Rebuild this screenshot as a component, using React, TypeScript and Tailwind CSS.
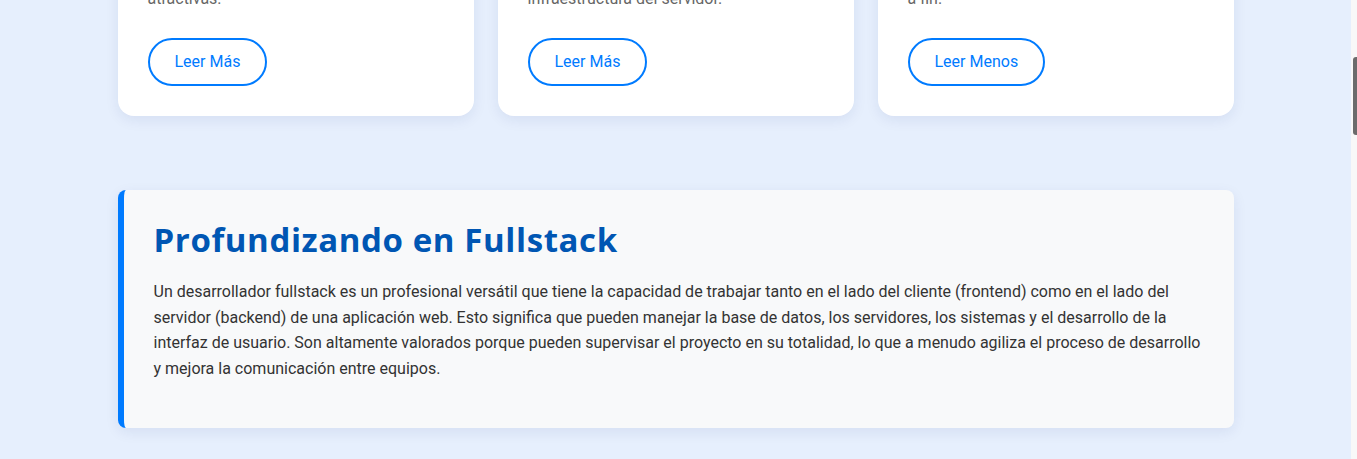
import React from "react";

const cards = [
  { tail: "atractivas.", label: "Leer Más" },
  { tail: "infraestructura del servidor.", label: "Leer Más" },
  { tail: "a fin.", label: "Leer Menos" },
];

export default function App() {
  return (
    <div className="flex h-[459px] overflow-hidden bg-[#e6effd] font-['Roboto',sans-serif]">
      <main className="flex-1">
        <div className="mx-auto w-[1140px] px-3">
          {/* Cards (scrolled, only the bottom is visible) */}
          <div className="-mt-[44px] grid grid-cols-3 gap-6">
            {cards.map((card, idx) => (
              <div
                key={idx}
                className="rounded-2xl bg-white p-[30px] shadow-[0_4px_14px_rgba(0,40,120,0.08)]"
              >
                <p className="mb-[26px] text-base leading-[1.6] text-[#666]">{card.tail}</p>
                <button className="rounded-full border-2 border-[#007bff] px-[25px] py-[10px] text-base leading-6 text-[#007bff]">
                  {card.label}
                </button>
              </div>
            ))}
          </div>

          {/* Deep dive */}
          <section className="mt-[74px] rounded-lg border-l-[6px] border-[#007bff] bg-[#f8f9fa] py-[30px] pl-[30px] pr-[30px] shadow-[0_4px_14px_rgba(0,40,120,0.08)]">
            <h2 className="mb-5 font-['Open_Sans',sans-serif] text-[33px] font-bold leading-[1.2] tracking-[0.6px] text-[#0056b3]">
              Profundizando en Fullstack
            </h2>
            <p className="mb-4 text-base leading-[1.6] text-[#333]">
              Un desarrollador fullstack es un profesional versátil que tiene la capacidad de trabajar tanto en el
              lado del cliente (frontend) como en el lado del servidor (backend) de una aplicación web. Esto significa
              que pueden manejar la base de datos, los servidores, los sistemas y el desarrollo de la interfaz de
              usuario. Son altamente valorados porque pueden supervisar el proyecto en su totalidad, lo que a menudo
              agiliza el proceso de desarrollo y mejora la comunicación entre equipos.
            </p>
          </section>
        </div>
      </main>

      {/* Scrollbar */}
      <div className="w-[6px] bg-[#f8f8f8] pl-[2px]">
        <div className="mt-[57px] h-[78px] rounded-l-[3px] bg-[#6b6b6b]" />
      </div>
    </div>
  );
}
